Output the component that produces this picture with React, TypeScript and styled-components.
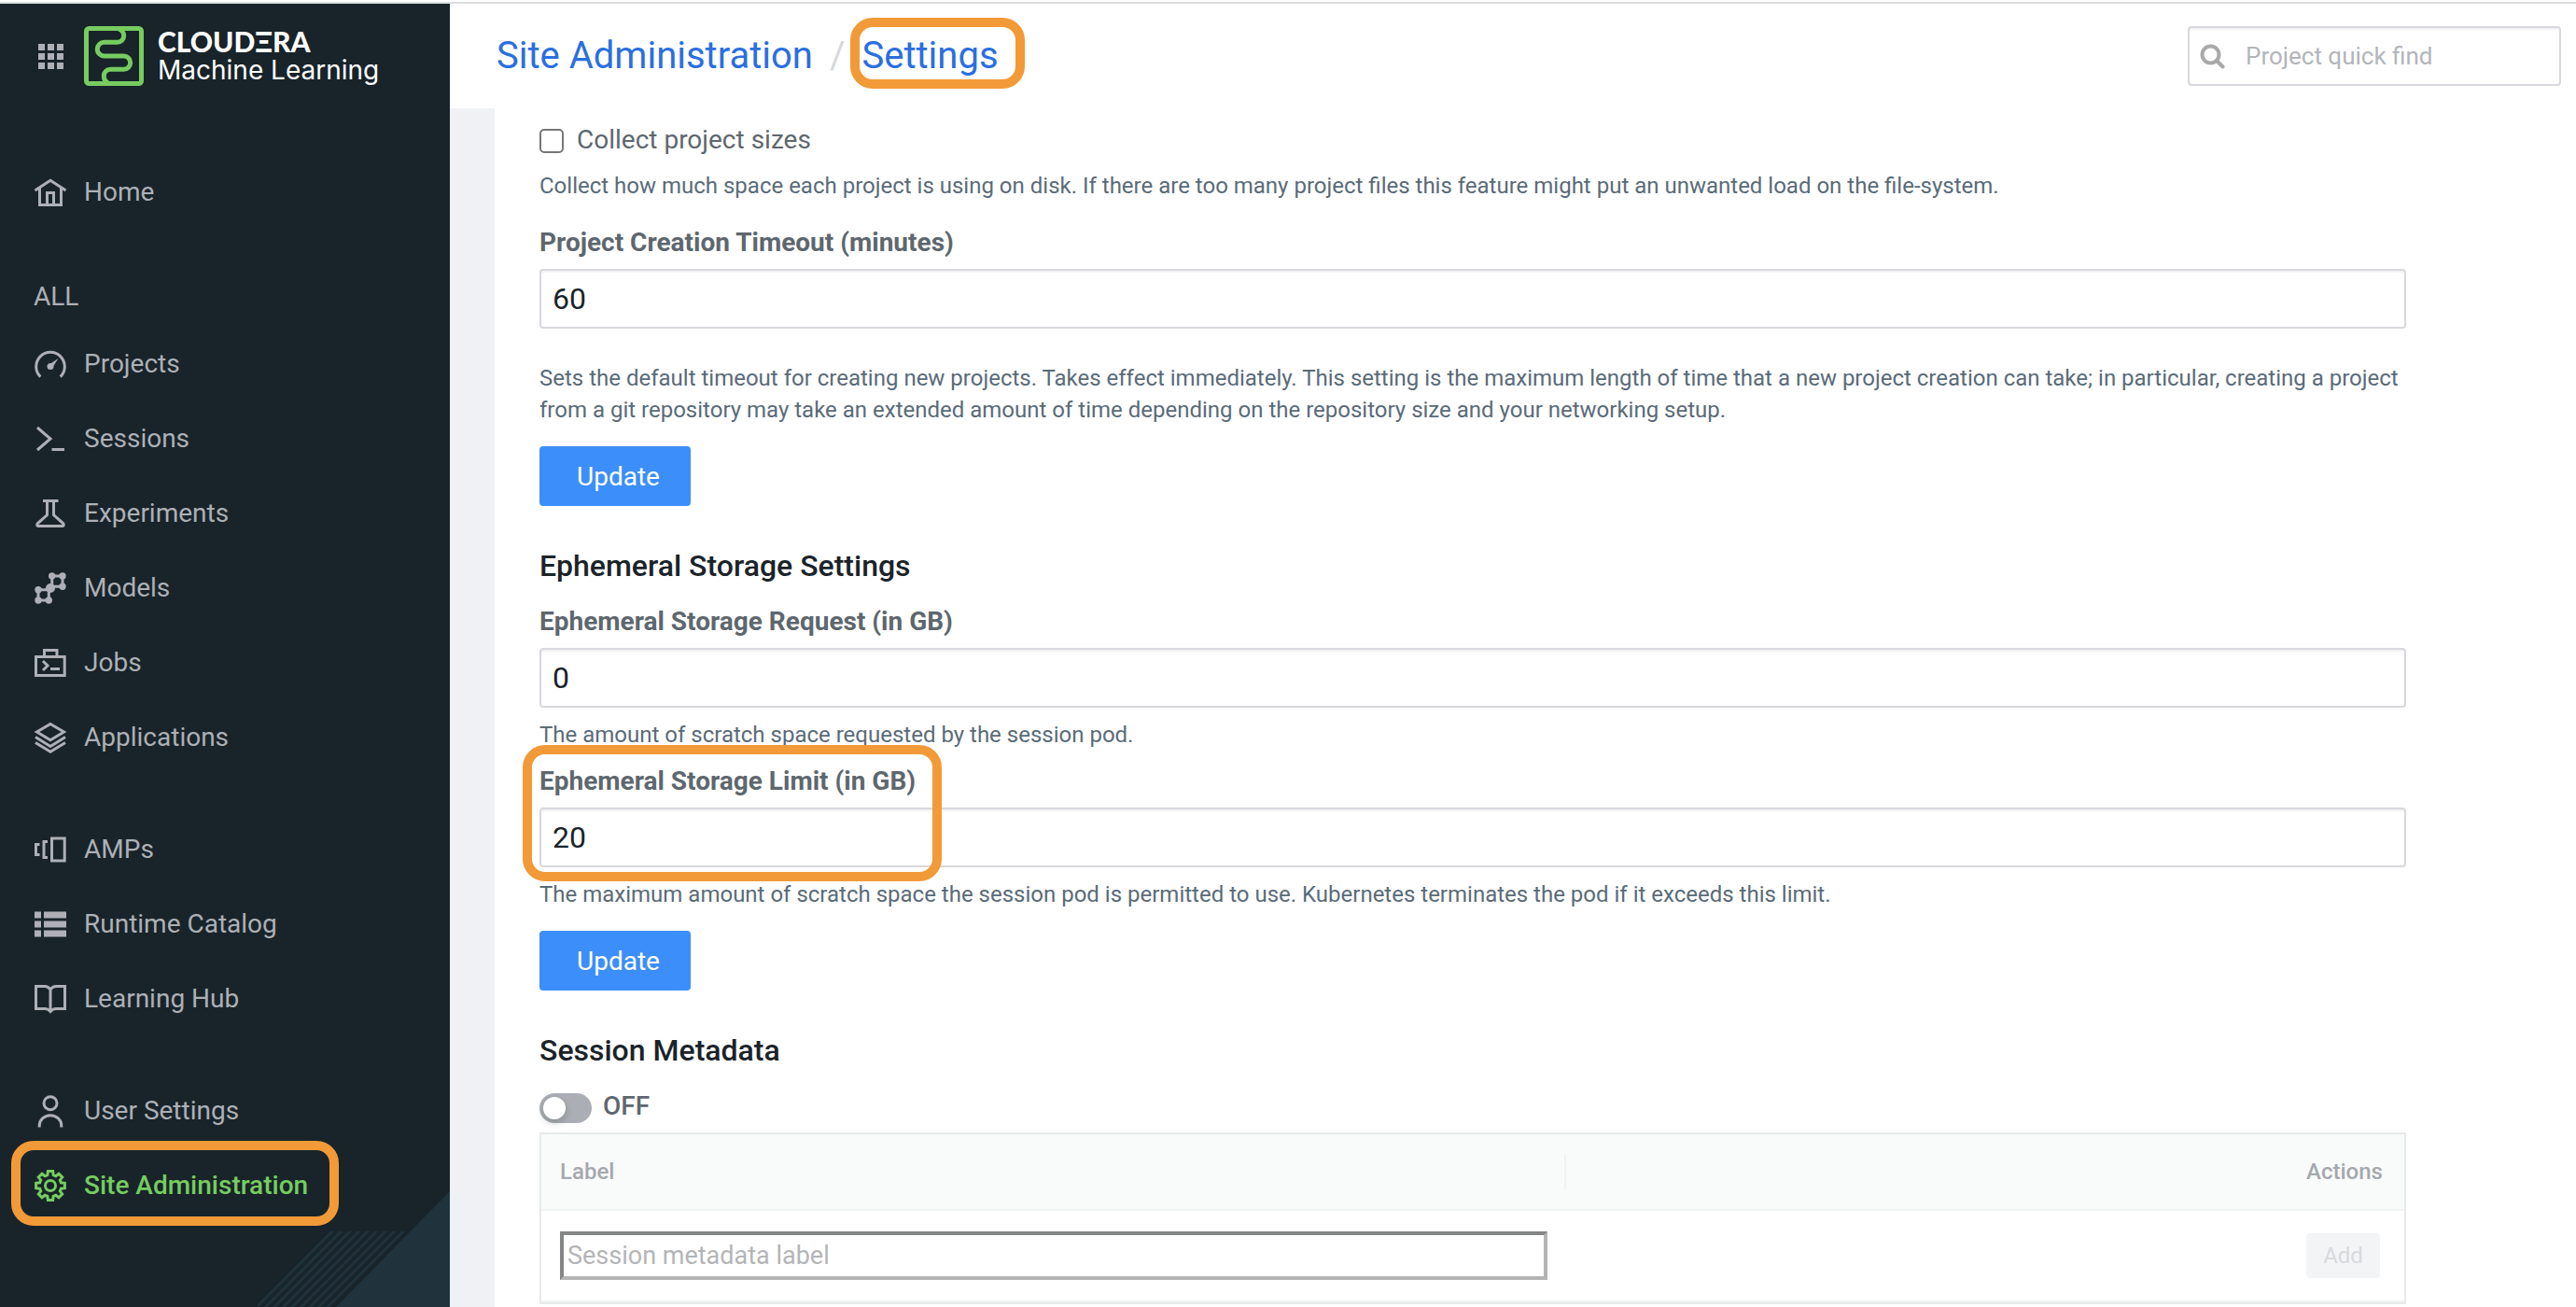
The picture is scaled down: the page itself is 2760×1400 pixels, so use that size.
import React from "react";
import styled, { createGlobalStyle, css } from "styled-components";

const GlobalStyle = createGlobalStyle`
  *, *::before, *::after { box-sizing: border-box; }
  body {
    margin: 0;
    background: #ffffff;
    font-family: Roboto, "Liberation Sans", sans-serif;
    font-size: 28px;
    color: #1b2329;
  }
  a { text-decoration: none; }
  button, input { font-family: inherit; }
`;

const Shell = styled.div`
  display: flex;
  min-height: 100vh;
  padding-top: 2px;
`;

/* ---------- sidebar ---------- */

const Sidebar = styled.aside`
  position: relative;
  flex: 0 0 482px;
  border-top: 2px solid #dcdddf;
  background: #18242a;
  color: #adb0b6;
`;

const Brand = styled.div`
  display: flex;
  align-items: center;
  height: 112px;
  padding: 0 40px;
`;

const AppsButton = styled.button`
  display: flex;
  padding: 0;
  margin-right: 21px;
  border: 0;
  background: none;
  color: inherit;
`;

const BrandLink = styled.a`
  display: flex;
  align-items: center;
  gap: 15px;
  color: #ffffff;
`;

const BrandText = styled.span`
  display: flex;
  flex-direction: column;
`;

const BrandName = styled.span`
  font: 900 30px/30px Lato, sans-serif;
`;

const ProductName = styled.span`
  font: 400 28px/32px Inter, sans-serif;
`;

const Nav = styled.nav`
  position: relative;
  z-index: 1;
  display: flex;
  flex-direction: column;
  gap: 40px;
  padding-top: 49px;
`;

const NavGroup = styled.div`
  display: flex;
  flex-direction: column;
`;

const NavTitle = styled.div`
  padding: 12px 36px 10px;
  line-height: 42px;
`;

const NavItem = styled.a<{ $active?: boolean }>`
  position: relative;
  display: flex;
  align-items: center;
  gap: 18px;
  height: 80px;
  padding-left: 36px;
  color: ${(p) => (p.$active ? "#76cc60" : "inherit")};
  font-weight: ${(p) => (p.$active ? 500 : 400)};
`;

const Backdrop = styled.svg`
  position: absolute;
  right: 0;
  bottom: 0;
`;

/* ---------- orange call-outs drawn over the page ---------- */

const Callout = styled.span<{ $area: "nav" | "crumb" | "field" }>`
  position: absolute;
  z-index: 2;
  border: 10px solid #f29a38;
  border-radius: 24px;
  pointer-events: none;
  ${(p) =>
    p.$area === "nav"
      ? css`
          left: 12px;
          top: -7px;
          width: 351px;
          height: 91px;
        `
      : p.$area === "crumb"
        ? css`
            inset: -17px -28px -11px -12px;
          `
        : css`
            left: -18px;
            top: -19px;
            width: 449px;
            height: 146px;
          `}
`;

/* ---------- main column ---------- */

const Main = styled.main`
  flex: 1;
  min-width: 0;
  display: flex;
  flex-direction: column;
  border-top: 2px solid #dcdddf;
  background: #f0f1f5;
`;

const Header = styled.header`
  display: flex;
  align-items: center;
  justify-content: space-between;
  height: 112px;
  padding: 0 16px 0 50px;
  background: #ffffff;
`;

const Crumbs = styled.nav`
  display: flex;
  align-items: center;
  gap: 18px;
  font-size: 40px;
  line-height: 48px;
`;

const Crumb = styled.a`
  position: relative;
  color: #2a6fe0;
`;

const Slash = styled.span`
  color: #d6d7dc;
`;

const boxed = css`
  border: 2px solid #d8d8de;
  border-radius: 4px;
  background: #ffffff;
  box-shadow: inset 0 2px 2px rgba(0, 0, 0, 0.06);
`;

const Search = styled.label`
  ${boxed}
  display: flex;
  align-items: center;
  gap: 22px;
  width: 400px;
  height: 64px;
  padding: 0 10px;
`;

const SearchInput = styled.input`
  flex: 1;
  min-width: 0;
  padding: 0;
  border: 0;
  outline: 0;
  background: none;
  font-size: 26px;
  &::placeholder {
    color: #b2b5bb;
  }
`;

const Panel = styled.div`
  flex: 1;
  margin-left: 48px;
  padding: 14px 48px 0;
  background: #ffffff;
`;

const Content = styled.div`
  display: flex;
  flex-direction: column;
  max-width: 2000px;
`;

const CheckRow = styled.label`
  display: flex;
  align-items: center;
  gap: 14px;
  line-height: 40px;
  color: #5e676e;
`;

const Checkbox = styled.input`
  appearance: none;
  width: 26px;
  height: 26px;
  margin: 2px 0 0;
  border: 2px solid #767676;
  border-radius: 5px;
  background: #ffffff;
`;

const Help = styled.p<{ $far?: boolean }>`
  margin: ${(p) => (p.$far ? "36px" : "12px")} 0 0;
  font-size: 24px;
  line-height: 34px;
  color: #5a6b78;
`;

const Field = styled.div<{ $gap: number }>`
  position: relative;
  display: flex;
  flex-direction: column;
  gap: 8px;
  margin-top: ${(p) => p.$gap}px;
`;

const FieldLabel = styled.label`
  font-weight: 700;
  line-height: 40px;
  color: #5e676e;
`;

const TextInput = styled.input`
  ${boxed}
  width: 100%;
  height: 64px;
  padding: 0 12px;
  font-size: 32px;
  color: #1b2329;
`;

const Update = styled.button`
  align-self: flex-start;
  height: 64px;
  margin-top: 22px;
  padding: 0 33px 0 40px;
  border: 0;
  border-radius: 4px;
  background: #3c8efa;
  color: #ffffff;
  font-size: 28px;
`;

const SectionTitle = styled.h2`
  margin: 44px 0 0;
  font-size: 32px;
  font-weight: 500;
  line-height: 40px;
`;

const SwitchRow = styled.label`
  display: flex;
  align-items: flex-start;
  gap: 12px;
  height: 32px;
  margin: 26px 0 10px;
  font-weight: 500;
  line-height: 28px;
  color: #5e676e;
`;

const Switch = styled.input`
  appearance: none;
  width: 56px;
  height: 32px;
  margin: 0;
  padding: 4px;
  border-radius: 16px;
  background: #abaeb4;
  &::before {
    content: "";
    display: block;
    width: 24px;
    height: 24px;
    border-radius: 12px;
    background: #ffffff;
    box-shadow: 0 4px 8px rgba(0, 35, 11, 0.2);
  }
`;

const TableFrame = styled.div`
  border: 2px solid #e7eae9;
`;

const Table = styled.table`
  width: 100%;
  border-collapse: separate;
  border-spacing: 0;
  table-layout: fixed;
  font-size: 24px;
`;

const HeadCell = styled.th<{ $width?: string; $rule?: boolean }>`
  position: relative;
  width: ${(p) => p.$width ?? "auto"};
  height: 82px;
  padding: 0 20px;
  border-bottom: 2px solid #f1f3f3;
  background: #f9fbfa;
  color: #a5a8ae;
  font-weight: 500;
  text-align: left;
  ${(p) =>
    p.$rule &&
    css`
      &::after {
        content: "";
        position: absolute;
        right: 0;
        top: 21px;
        width: 2px;
        height: 38px;
        background: #f1f2f2;
      }
    `}
`;

const Cell = styled.td`
  height: 98px;
  padding: 0 20px;
  border-bottom: 2px solid #f1f3f3;
`;

const MetaInput = styled.input`
  display: block;
  width: 100%;
  height: 52px;
  padding: 0 4px;
  border: 4px solid;
  border-color: #848685 #b4b4b4 #b4b4b4 #848685;
  background: #ffffff;
  font-size: 27px;
  &::placeholder {
    color: #b4b5b7;
  }
`;

const AddButton = styled.button`
  display: block;
  width: 79px;
  height: 48px;
  padding: 0;
  border: 0;
  border-radius: 4px;
  background: #f3f4f6;
  color: #d8d9dc;
  font-size: 24px;
`;

/* ---------- drawings ---------- */

const IconSvg = styled.svg`
  flex: none;
  width: 36px;
  height: 36px;
  fill: none;
  stroke: currentColor;
  stroke-width: 3;
`;

const gearPath = (() => {
  const points: string[] = [];
  const teeth = 8;
  for (let i = 0; i < teeth; i++) {
    const mid = (i * 2 * Math.PI) / teeth - Math.PI / 2;
    const corners: [number, number][] = [
      [-0.27, 11.8],
      [-0.17, 15.6],
      [0.17, 15.6],
      [0.27, 11.8],
    ];
    corners.forEach(([turn, radius]) => {
      const x = 18 + radius * Math.cos(mid + turn);
      const y = 19 + radius * Math.sin(mid + turn);
      points.push(`${x.toFixed(2)} ${y.toFixed(2)}`);
    });
  }
  return `M${points.join("L")}Z`;
})();

const icons: Record<string, React.ReactNode> = {
  home: <path d="M1.5 17L18 6.2 34.5 17M6.5 14V32.5H29.5V14M14.5 32V19.5H21.5V32" />,
  projects: (
    <>
      <path d="M7.3 32.6A15.3 15.3 0 1 1 28.7 32.6" />
      <circle cx="18" cy="21.5" r="3.5" fill="currentColor" stroke="none" />
      <path d="M16.5 19.5L26.5 13 20 23Z" fill="currentColor" stroke="none" />
    </>
  ),
  sessions: <path d="M4 7L18 19 4 31M19.5 30.5H33" />,
  experiments: (
    <path d="M10 5.5H26.5M14.5 6V20.5L4.2 29.8Q2.8 32.5 5.5 32.5H30.5Q33.2 32.5 31.8 29.8L21.5 20.5V6" />
  ),
  models: (
    <>
      <path d="M19.7 6H31V17.3H19.7ZM5 20.7H16.3V32H5Z" />
      <g fill="currentColor" stroke="none">
        <circle cx="19.7" cy="6" r="3.7" />
        <circle cx="31" cy="6" r="3.7" />
        <circle cx="31" cy="17.3" r="3.7" />
        <circle cx="18" cy="19" r="5" />
        <circle cx="5" cy="20.7" r="3.7" />
        <circle cx="5" cy="32" r="3.7" />
        <circle cx="16.3" cy="32" r="3.7" />
      </g>
    </>
  ),
  jobs: <path d="M2.5 12.5H33.2V32.5H2.5ZM11.5 12V5.5H25V12M10 17L15 22 10 27M18 25.5H28" />,
  applications: (
    <path d="M18 4.5L32.5 13 18 21.7 3.5 13ZM2 18.5L18 28.5 34 18.5M2 24.5L18 34.3 34 24.5" />
  ),
  amps: <path d="M19.5 7H33.2V31H19.5ZM15 10.5H11V27.5H15M6.5 13.5H2.5V24.5H6.5" />,
  runtime: (
    <path
      d="M1 5.5h7v7h-7zM11 5.5h24v7h-24zM1 15.5h7v7h-7zM11 15.5h24v7h-24zM1 25.5h7v7h-7zM11 25.5h24v7h-24z"
      fill="currentColor"
      stroke="none"
    />
  ),
  learning: (
    <path d="M18 9Q15.5 5.5 12 5.5H2.5V29.5H12Q15.5 29.5 18 32.5Q20.5 29.5 24 29.5H33.5V5.5H24Q20.5 5.5 18 9V32" />
  ),
  user: (
    <>
      <circle cx="18" cy="10.7" r="7" />
      <path d="M6.2 36.5V34.5A11.8 10.8 0 0 1 29.8 34.5V36.5" />
    </>
  ),
  admin: (
    <>
      <path d={gearPath} />
      <circle cx="18" cy="19" r="5.5" />
    </>
  ),
};

const Icon = ({ name }: { name: string }) => (
  <IconSvg viewBox="0 0 36 36" overflow="visible" aria-hidden="true">
    {icons[name]}
  </IconSvg>
);

const AppsIcon = () => (
  <svg width="29" height="29" viewBox="0 0 29 29" fill="currentColor" aria-hidden="true">
    {[1, 11, 21].map((y) => [1, 11, 21].map((x) => <rect key={`${x}-${y}`} x={x} y={y} width="7" height="7" />))}
  </svg>
);

const LogoMark = () => (
  <svg width="64" height="64" viewBox="0 0 64 64" fill="none" stroke="#76cc60" strokeWidth="5" aria-hidden="true">
    <rect x="2.5" y="2.5" width="59" height="59" rx="3" />
    <path d="M37 3Q42.7 5 42.7 10.3A7 7 0 0 1 35.7 17.3H21.6A7.35 7.35 0 0 0 21.6 32H42.5A7.15 7.15 0 0 1 42.5 46.3H28.3A7 7 0 0 0 21.3 53.3Q21.3 59 26 61" />
  </svg>
);

const SearchIcon = () => (
  <svg width="28" height="28" viewBox="0 0 28 28" fill="none" stroke="#a9a9a9" strokeWidth="4" aria-hidden="true">
    <circle cx="12.5" cy="12.5" r="9" />
    <path d="M19 19L25.5 25.5" strokeLinecap="round" />
  </svg>
);

const SidebarBackdrop = () => (
  <Backdrop width="206" height="124" viewBox="0 0 206 124" aria-hidden="true">
    <path d="M206 0V124H84Z" fill="#20333d" />
    {Array.from({ length: 9 }, (_, i) => (
      <path key={i} d={`M${78 + i * 9.5} 43h4L${1 + i * 9.5} 124h-4Z`} fill="#20333d" />
    ))}
  </Backdrop>
);

/* ---------- data ---------- */

type Group = { title?: string; items: { icon: string; label: string; active?: boolean }[] };

const groups: Group[] = [
  { items: [{ icon: "home", label: "Home" }] },
  {
    title: "ALL",
    items: [
      { icon: "projects", label: "Projects" },
      { icon: "sessions", label: "Sessions" },
      { icon: "experiments", label: "Experiments" },
      { icon: "models", label: "Models" },
      { icon: "jobs", label: "Jobs" },
      { icon: "applications", label: "Applications" },
    ],
  },
  {
    items: [
      { icon: "amps", label: "AMPs" },
      { icon: "runtime", label: "Runtime Catalog" },
      { icon: "learning", label: "Learning Hub" },
    ],
  },
  {
    items: [
      { icon: "user", label: "User Settings" },
      { icon: "admin", label: "Site Administration", active: true },
    ],
  },
];

export default function App() {
  return (
    <>
      <GlobalStyle />
      <Shell>
        <Sidebar>
          <Brand>
            <AppsButton type="button" aria-label="Apps">
              <AppsIcon />
            </AppsButton>
            <BrandLink href="#">
              <LogoMark />
              <BrandText>
                <BrandName>CLOUDΞRA</BrandName>
                <ProductName>Machine Learning</ProductName>
              </BrandText>
            </BrandLink>
          </Brand>
          <Nav>
            {groups.map((group, index) => (
              <NavGroup key={index}>
                {group.title && <NavTitle>{group.title}</NavTitle>}
                {group.items.map((item) => (
                  <NavItem key={item.label} href="#" $active={item.active}>
                    <Icon name={item.icon} />
                    {item.label}
                    {item.active && <Callout $area="nav" />}
                  </NavItem>
                ))}
              </NavGroup>
            ))}
          </Nav>
          <SidebarBackdrop />
        </Sidebar>

        <Main>
          <Header>
            <Crumbs aria-label="Breadcrumb">
              <Crumb href="#">Site Administration</Crumb>
              <Slash>/</Slash>
              <Crumb href="#">
                Settings
                <Callout $area="crumb" />
              </Crumb>
            </Crumbs>
            <Search>
              <SearchIcon />
              <SearchInput type="text" placeholder="Project quick find" aria-label="Project quick find" />
            </Search>
          </Header>

          <Panel>
            <Content>
              <CheckRow>
                <Checkbox type="checkbox" />
                Collect project sizes
              </CheckRow>
              <Help>
                Collect how much space each project is using on disk. If there are too many project files this feature
                might put an unwanted load on the file-system.
              </Help>

              <Field $gap={24}>
                <FieldLabel htmlFor="timeout">Project Creation Timeout (minutes)</FieldLabel>
                <TextInput id="timeout" type="text" defaultValue="60" />
              </Field>
              <Help $far>
                Sets the default timeout for creating new projects. Takes effect immediately. This setting is the maximum
                length of time that a new project creation can take; in particular, creating a project from a git
                repository may take an extended amount of time depending on the repository size and your networking
                setup.
              </Help>
              <Update type="button">Update</Update>

              <SectionTitle>Ephemeral Storage Settings</SectionTitle>
              <Field $gap={20}>
                <FieldLabel htmlFor="storage-request">Ephemeral Storage Request (in GB)</FieldLabel>
                <TextInput id="storage-request" type="text" defaultValue="0" />
              </Field>
              <Help>The amount of scratch space requested by the session pod.</Help>
              <Field $gap={13}>
                <FieldLabel htmlFor="storage-limit">Ephemeral Storage Limit (in GB)</FieldLabel>
                <TextInput id="storage-limit" type="text" defaultValue="20" />
                <Callout $area="field" />
              </Field>
              <Help>
                The maximum amount of scratch space the session pod is permitted to use. Kubernetes terminates the pod if
                it exceeds this limit.
              </Help>
              <Update type="button">Update</Update>

              <SectionTitle>Session Metadata</SectionTitle>
              <SwitchRow>
                <Switch type="checkbox" role="switch" />
                OFF
              </SwitchRow>
              <TableFrame>
                <Table>
                  <thead>
                    <tr>
                      <HeadCell $width="55%" $rule>
                        Label
                      </HeadCell>
                      <HeadCell />
                      <HeadCell $width="125px">Actions</HeadCell>
                    </tr>
                  </thead>
                  <tbody>
                    <tr>
                      <Cell>
                        <MetaInput type="text" placeholder="Session metadata label" aria-label="Session metadata label" />
                      </Cell>
                      <Cell />
                      <Cell>
                        <AddButton type="button" disabled>
                          Add
                        </AddButton>
                      </Cell>
                    </tr>
                  </tbody>
                </Table>
              </TableFrame>
            </Content>
          </Panel>
        </Main>
      </Shell>
    </>
  );
}
